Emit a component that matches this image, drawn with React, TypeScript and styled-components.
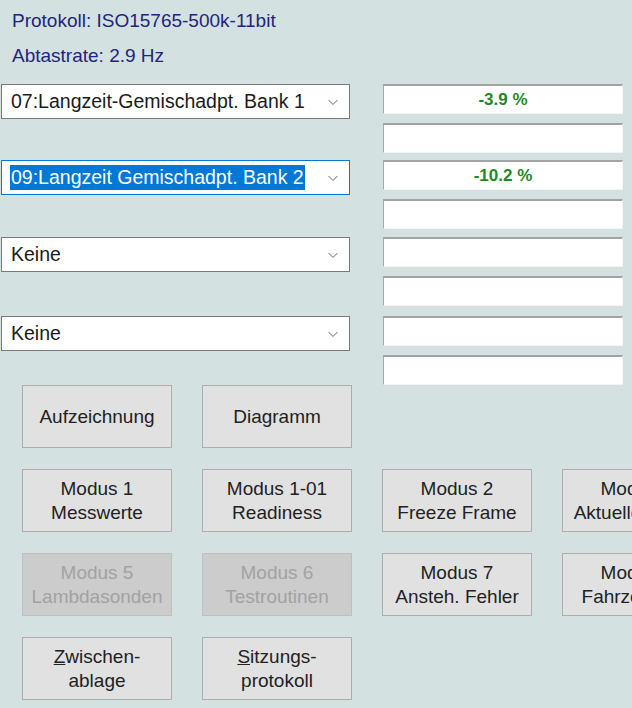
import React from "react";
import styled, { createGlobalStyle } from "styled-components";

const GlobalStyle = createGlobalStyle`
  html, body {
    margin: 0;
    padding: 0;
    overflow: hidden;
    background: #d3e1e1;
    font-family: "Liberation Sans", Arial, sans-serif;
  }
`;

const Page = styled.div`
  width: 632px;
  height: 708px;
  overflow: hidden;
  background: #d3e1e1;
`;

const Header = styled.div`
  padding: 3px 0 0 12px;
  color: #24247c;
  font-size: 19px;
  line-height: 35px;
`;

const Channels = styled.div`
  margin-top: 11px;
  padding-left: 1px;
  display: flex;
  flex-direction: column;
`;

const ChannelRow = styled.div<{ $gap: number }>`
  display: flex;
  align-items: flex-start;
  gap: 33px;
  margin-top: ${(p) => p.$gap}px;
`;

const Select = styled.div<{ $focused?: boolean }>`
  box-sizing: border-box;
  width: 349px;
  height: 35px;
  background: #fff;
  border: 1px solid ${(p) => (p.$focused ? "#0078d7" : "#7a7a7a")};
  display: flex;
  align-items: center;
  padding: 0 10px 0 8px;
  font-size: 19.5px;
  color: #1b1b1b;
`;

const SelectText = styled.span<{ $selected?: boolean }>`
  flex: 1;
  white-space: nowrap;
  span {
    background: ${(p) => (p.$selected ? "#0078d7" : "transparent")};
    color: ${(p) => (p.$selected ? "#fff" : "#1b1b1b")};
    padding: 1px 1px 2px 1px;
  }
`;

const Chevron = () => (
  <svg width="12" height="8" viewBox="0 0 12 8">
    <polyline
      points="1.5,2 6,6.5 10.5,2"
      fill="none"
      stroke="#6a6a6a"
      strokeWidth="1"
    />
  </svg>
);

const ValuePair = styled.div`
  display: flex;
  flex-direction: column;
  gap: 9px;
`;

const ValueBox = styled.div`
  box-sizing: border-box;
  width: 240px;
  height: 30px;
  background: #fff;
  border-style: solid;
  border-width: 2px 1px 1px 1px;
  border-color: #a3a3a3 #f4f4f4 #f4f4f4 #a8a8a8;
  display: flex;
  align-items: center;
  justify-content: center;
  color: #1f8a23;
  font-weight: bold;
  font-size: 17px;
`;

const ButtonGrid = styled.div`
  margin-top: 0px;
  padding-left: 22px;
  display: grid;
  grid-template-columns: repeat(4, 150px);
  grid-auto-rows: 63px;
  column-gap: 30px;
  row-gap: 21px;
`;

const Button = styled.div<{ $disabled?: boolean }>`
  box-sizing: border-box;
  border: 1px solid ${(p) => (p.$disabled ? "#bfbfbf" : "#adadad")};
  background: ${(p) => (p.$disabled ? "#cccccc" : "#e1e1e1")};
  color: ${(p) => (p.$disabled ? "#a2a2a2" : "#222")};
  font-size: 19px;
  line-height: 24px;
  display: flex;
  align-items: center;
  justify-content: center;
  text-align: center;
  white-space: nowrap;
`;

const Spacer = styled.div``;

interface Channel {
  label: string;
  value?: string;
  focused?: boolean;
  gap: number;
}

const channels: Channel[] = [
  { label: "07:Langzeit-Gemischadpt. Bank 1", value: "-3.9 %", gap: 0 },
  {
    label: "09:Langzeit Gemischadpt. Bank 2",
    value: "-10.2 %",
    focused: true,
    gap: 7,
  },
  { label: "Keine", gap: 8 },
  { label: "Keine", gap: 10 },
];

const App = () => {
  return (
    <Page>
      <GlobalStyle />
      <Header>
        <div>Protokoll: ISO15765-500k-11bit</div>
        <div>Abtastrate: 2.9 Hz</div>
      </Header>
      <Channels>
        {channels.map((c, i) => (
          <ChannelRow key={i} $gap={c.gap}>
            <Select $focused={c.focused}>
              <SelectText $selected={c.focused}>
                <span>{c.label}</span>
              </SelectText>
              <Chevron />
            </Select>
            <ValuePair>
              <ValueBox>{c.value}</ValueBox>
              <ValueBox />
            </ValuePair>
          </ChannelRow>
        ))}
      </Channels>
      <ButtonGrid>
        <Button>Aufzeichnung</Button>
        <Button>Diagramm</Button>
        <Spacer />
        <Spacer />
        <Button>
          Modus 1<br />
          Messwerte
        </Button>
        <Button>
          Modus 1-01<br />
          Readiness
        </Button>
        <Button>
          Modus 2<br />
          Freeze Frame
        </Button>
        <Button>
          Modus 3<br />
          Aktuelle Fehler
        </Button>
        <Button $disabled>
          Modus 5<br />
          Lambdasonden
        </Button>
        <Button $disabled>
          Modus 6<br />
          Testroutinen
        </Button>
        <Button>
          Modus 7<br />
          Ansteh. Fehler
        </Button>
        <Button>
          Modus 9<br />
          Fahrzeuginfo
        </Button>
        <Button>
          <span>
            <u>Z</u>wischen-<br />
            ablage
          </span>
        </Button>
        <Button>
          <span>
            <u>S</u>itzungs-<br />
            protokoll
          </span>
        </Button>
      </ButtonGrid>
    </Page>
  );
};

export default App;
